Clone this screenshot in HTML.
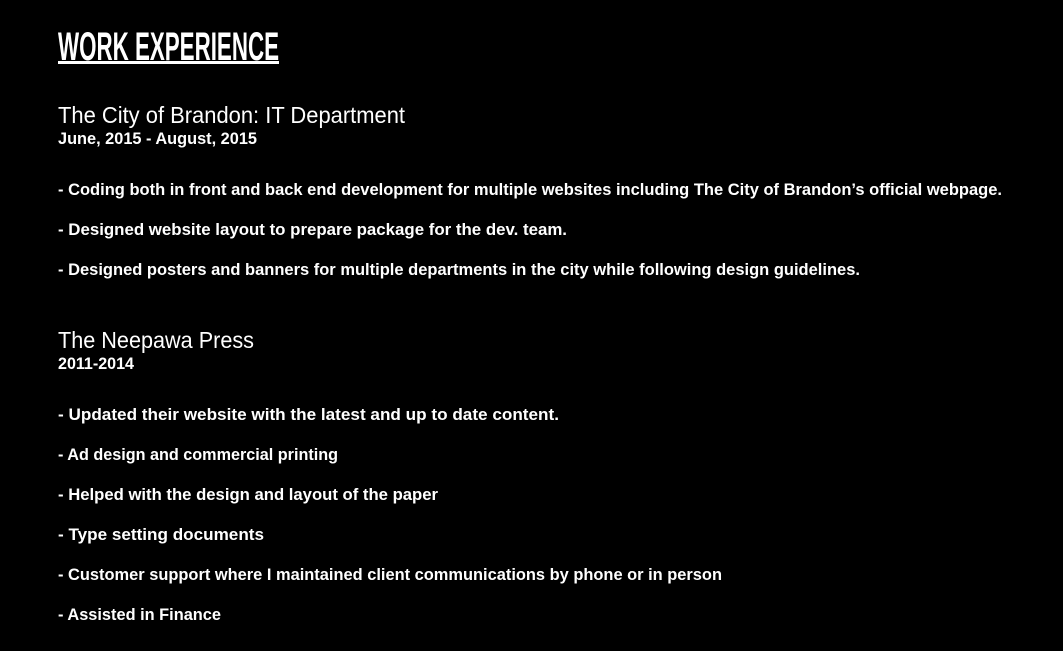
<!DOCTYPE html>
<html><head><meta charset="utf-8"><style>
html,body{margin:0;padding:0;background:#000;width:1063px;height:651px;overflow:hidden}
svg{display:block}
text{fill:#fff;font-family:"Liberation Sans",sans-serif}
.b{font-weight:bold;font-size:17px}
</style></head><body>
<svg width="1063" height="651" viewBox="0 0 1063 651">
<text x="58" y="60" font-size="40" font-weight="bold" textLength="221" lengthAdjust="spacingAndGlyphs">WORK EXPERIENCE</text>
<rect x="58" y="61" width="221" height="3" fill="#fff"/>
<text x="58" y="123" font-size="23" textLength="347" lengthAdjust="spacingAndGlyphs">The City of Brandon: IT Department</text>
<text x="58" y="144" font-size="17" font-weight="bold" textLength="199" lengthAdjust="spacingAndGlyphs">June, 2015 - August, 2015</text>
<text class="b" x="58" y="195" textLength="944" lengthAdjust="spacingAndGlyphs">- Coding both in front and back end development for multiple websites including The City of Brandon’s official webpage.</text>
<text class="b" x="58" y="235" textLength="509" lengthAdjust="spacingAndGlyphs">- Designed website layout to prepare package for the dev. team.</text>
<text class="b" x="58" y="275" textLength="802" lengthAdjust="spacingAndGlyphs">- Designed posters and banners for multiple departments in the city while following design guidelines.</text>
<text x="58" y="348" font-size="23" textLength="196" lengthAdjust="spacingAndGlyphs">The Neepawa Press</text>
<text x="58" y="369" font-size="17" font-weight="bold" textLength="76" lengthAdjust="spacingAndGlyphs">2011-2014</text>
<text class="b" x="58" y="420" textLength="501" lengthAdjust="spacingAndGlyphs">- Updated their website with the latest and up to date content.</text>
<text class="b" x="58" y="460" textLength="280" lengthAdjust="spacingAndGlyphs">- Ad design and commercial printing</text>
<text class="b" x="58" y="500" textLength="380" lengthAdjust="spacingAndGlyphs">- Helped with the design and layout of the paper</text>
<text class="b" x="58" y="540" textLength="206" lengthAdjust="spacingAndGlyphs">- Type setting documents</text>
<text class="b" x="58" y="580" textLength="664" lengthAdjust="spacingAndGlyphs">- Customer support where I maintained client communications by phone or in person</text>
<text class="b" x="58" y="620" textLength="163" lengthAdjust="spacingAndGlyphs">- Assisted in Finance</text>
</svg>
</body></html>
